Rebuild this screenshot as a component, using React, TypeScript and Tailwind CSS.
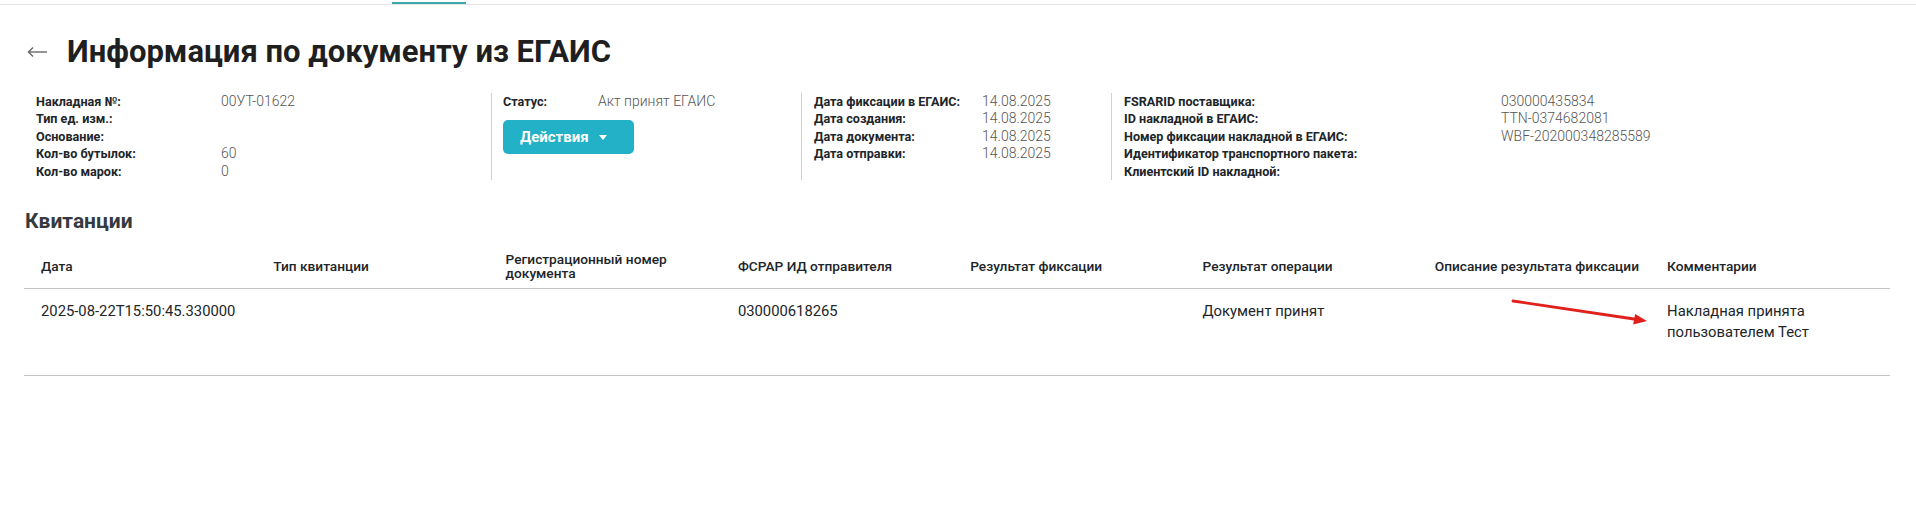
import React from "react";

const col1 = [
  ["Накладная №:", "00УТ-01622"],
  ["Тип ед. изм.:", ""],
  ["Основание:", ""],
  ["Кол-во бутылок:", "60"],
  ["Кол-во марок:", "0"],
];

const col3 = [
  ["Дата фиксации в ЕГАИС:", "14.08.2025"],
  ["Дата создания:", "14.08.2025"],
  ["Дата документа:", "14.08.2025"],
  ["Дата отправки:", "14.08.2025"],
];

const col4 = [
  ["FSRARID поставщика:", "030000435834"],
  ["ID накладной в ЕГАИС:", "TTN-0374682081"],
  ["Номер фиксации накладной в ЕГАИС:", "WBF-202000348285589"],
  ["Идентификатор транспортного пакета:", ""],
  ["Клиентский ID накладной:", ""],
];

const headers = [
  "Дата",
  "Тип квитанции",
  "Регистрационный номер документа",
  "ФСРАР ИД отправителя",
  "Результат фиксации",
  "Результат операции",
  "Описание результата фиксации",
  "Комментарии",
];

const rows = [
  [
    "2025-08-22T15:50:45.330000",
    "",
    "",
    "030000618265",
    "",
    "Документ принят",
    "",
    "Накладная принята пользователем Тест",
  ],
];

function Field({ label, value, cols }: { label: string; value: string; cols: string }) {
  return (
    <div className={`grid ${cols} h-[17.4px] items-end leading-[17.4px]`}>
      <span className="text-[12.6px] font-bold text-[#212529]">{label}</span>
      <span className="text-[14px] font-light text-[#555]">{value}</span>
    </div>
  );
}

export default function App() {
  return (
    <div className="relative min-h-[520px] w-[1916px] bg-white font-[Roboto,'Liberation_Sans',sans-serif] text-[#212529]">
      {/* tab strip */}
      <div className="flex h-[5px] border-b border-[#e3e3e3]">
        <div className="ml-[392px] mt-[2px] h-[2px] w-[74px] bg-[#3aa7a9]" />
      </div>

      <div className="mt-[30px] flex items-center pl-[27px]">
        <svg width="20" height="12" viewBox="0 0 20 12" fill="none" stroke="#666" strokeWidth="1.4">
          <path d="M20 6H1.5" />
          <path d="M6 1.5L1.5 6L6 10.5" />
        </svg>
        <h1 className="ml-[20px] text-[31px] font-bold leading-[34px] text-[#1f1f1f]">
          Информация по документу из ЕГАИС
        </h1>
      </div>

      {/* document info */}
      <div className="mt-[24px] flex pl-[24px]">
        <div className="w-[467px] px-[12px]">
          {col1.map(([l, v]) => (
            <Field key={l} label={l} value={v} cols="grid-cols-[185px_1fr]" />
          ))}
        </div>
        <div className="w-[310px] border-l border-[#d0d0d0] pl-[11px]">
          <Field label="Статус:" value="Акт принят ЕГАИС" cols="grid-cols-[95px_1fr]" />
          <button className="mt-[10px] flex h-[34px] w-[131px] items-center rounded-[5px] bg-[#22b1c6] pl-[17px] text-[15px] font-bold text-white">
            Действия
            <svg className="ml-[10px]" width="8" height="5" viewBox="0 0 8 5" fill="white">
              <polygon points="0,0 8,0 4,5" />
            </svg>
          </button>
        </div>
        <div className="w-[310px] border-l border-[#d0d0d0] pl-[12px]">
          {col3.map(([l, v]) => (
            <Field key={l} label={l} value={v} cols="grid-cols-[168px_1fr]" />
          ))}
        </div>
        <div className="w-[781px] border-l border-[#d0d0d0] pl-[12px]">
          {col4.map(([l, v]) => (
            <Field key={l} label={l} value={v} cols="grid-cols-[377px_1fr]" />
          ))}
        </div>
      </div>

      <h2 className="mt-[29px] pl-[25px] text-[21px] font-bold leading-[24px] text-[#343a40]">Квитанции</h2>

      {/* receipts table */}
      <div className="ml-[24px] mt-[12px] w-[1866px]">
        <div className="grid h-[44px] grid-cols-[repeat(8,232.3px)] items-center border-b border-[#c4c4c4]">
          {headers.map((h) => (
            <div key={h} className="pl-[17px] pr-[2px] text-[13.7px] font-medium leading-[14px] text-[#212529]">
              {h}
            </div>
          ))}
        </div>
        {rows.map((r, i) => (
          <div
            key={i}
            className="grid h-[87px] grid-cols-[repeat(8,232.3px)] items-start border-b border-[#c4c4c4] pt-[12px] text-[14.8px] leading-[21px] text-[#212529]"
          >
            {r.map((c, j) => (
              <div key={j} className="pl-[17px] pr-[20px]">
                {c}
              </div>
            ))}
          </div>
        ))}
      </div>

      {/* red annotation arrow */}
      <svg
        className="absolute left-[1505px] top-[290px]"
        width="150"
        height="40"
        viewBox="0 0 150 40"
        fill="none"
      >
        <path d="M8 11L129 29" stroke="#e1201b" strokeWidth="2.8" strokeLinecap="round" />
        <polygon points="142,31 128.2,34.5 130.1,24" fill="#e1201b" />
      </svg>
    </div>
  );
}
